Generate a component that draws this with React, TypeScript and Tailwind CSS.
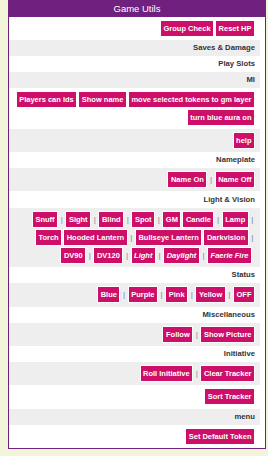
import React from 'react';

type Item = { t: string; i?: boolean } | '|';

const Btn: React.FC<{ label: string; italic?: boolean }> = ({ label, italic }) => (
  <span
    className={`inline-block border border-white bg-[#ce0f69] px-[2.5px] h-[17px] leading-[15px] text-[7.5px] font-bold text-white whitespace-nowrap ${italic ? 'italic' : ''}`}
  >
    {label}
  </span>
);

const Sep: React.FC = () => <span className="px-[1.6px] text-[8px] leading-[15px] text-[#6f8298]">|</span>;

const Line: React.FC<{ items: Item[]; extra?: string }> = ({ items, extra }) => (
  <div className={`flex justify-end items-center gap-px ${extra ?? ''}`}>
    {items.map((it, k) => (it === '|' ? <Sep key={k} /> : <Btn key={k} label={it.t} italic={it.i} />))}
  </div>
);

const b = (t: string, i?: boolean): Item => ({ t, i });

const Label: React.FC<{ text: string; gray?: boolean; tall?: boolean }> = ({ text, gray, tall }) => (
  <div
    className={`${tall ? 'h-[17px]' : 'h-4'} flex items-center justify-end pr-[5px] text-[7.7px] font-bold text-[#333333] ${gray ? 'bg-[#eeeeee]' : 'bg-white'}`}
  >
    {text}
  </div>
);

const Buttons: React.FC<{ lines: Item[][]; gray?: boolean; last?: string; tall?: boolean }> = ({ lines, gray, last, tall }) => (
  <div className={`flex flex-col gap-px pt-[3px] ${tall ? 'pb-[4px]' : 'pb-[3px]'} pr-[5px] ${gray ? 'bg-[#eeeeee]' : 'bg-white'}`}>
    {lines.map((l, k) => (
      <Line key={k} items={l} extra={k === lines.length - 1 ? last : undefined} />
    ))}
  </div>
);

export default function App() {
  return (
    <div className="w-[268px] h-[456px] bg-[#f2f5d9] pl-[8px] font-['Liberation_Sans',Arial,sans-serif]">
      <div className="w-[258px] border-x border-b border-[#70207f] bg-white">
        <div className="h-[17px] bg-[#70207f] text-white text-[9.5px] leading-[17px] text-center">Game Utils</div>
        <div className="pr-[5px]">
          <Buttons lines={[[b('Group Check'), b('Reset HP')]]} />
          <Label text="Saves & Damage" gray />
          <Label text="Play Slots" />
          <Label text="MI" gray />
          <Buttons
            lines={[
              [b('Players can Ids'), b('Show name'), b('move selected tokens to gm layer')],
              [b('turn blue aura on')],
            ]}
          />
          <Buttons gray lines={[[b('help')]]} />
          <Label text="Nameplate" />
          <Buttons gray lines={[[b('Name On'), '|', b('Name Off')]]} />
          <Label text="Light & Vision" tall />
          <Buttons
            gray
            last="pr-[3px]"
            lines={[
              [b('Snuff'), '|', b('Sight'), '|', b('Blind'), '|', b('Spot'), '|', b('GM'), b('Candle'), '|', b('Lamp'), '|'],
              [b('Torch'), b('Hooded Lantern'), '|', b('Bullseye Lantern'), b('Darkvision'), '|'],
              [b('DV90'), '|', b('DV120'), '|', b('Light', true), '|', b('Daylight', true), '|', b('Faerie Fire', true)],
            ]}
          />
          <Label text="Status" />
          <Buttons gray tall lines={[[b('Blue'), '|', b('Purple'), '|', b('Pink'), '|', b('Yellow'), '|', b('OFF')]]} />
          <Label text="Miscellaneous" />
          <Buttons gray lines={[[b('Follow'), '|', b('Show Picture')]]} />
          <Label text="Initiative" />
          <Buttons gray lines={[[b('Roll Initiative'), '|', b('Clear Tracker')]]} />
          <Buttons tall lines={[[b('Sort Tracker')]]} />
          <Label text="menu" gray />
          <Buttons lines={[[b('Set Default Token')]]} />
        </div>
      </div>
    </div>
  );
}
